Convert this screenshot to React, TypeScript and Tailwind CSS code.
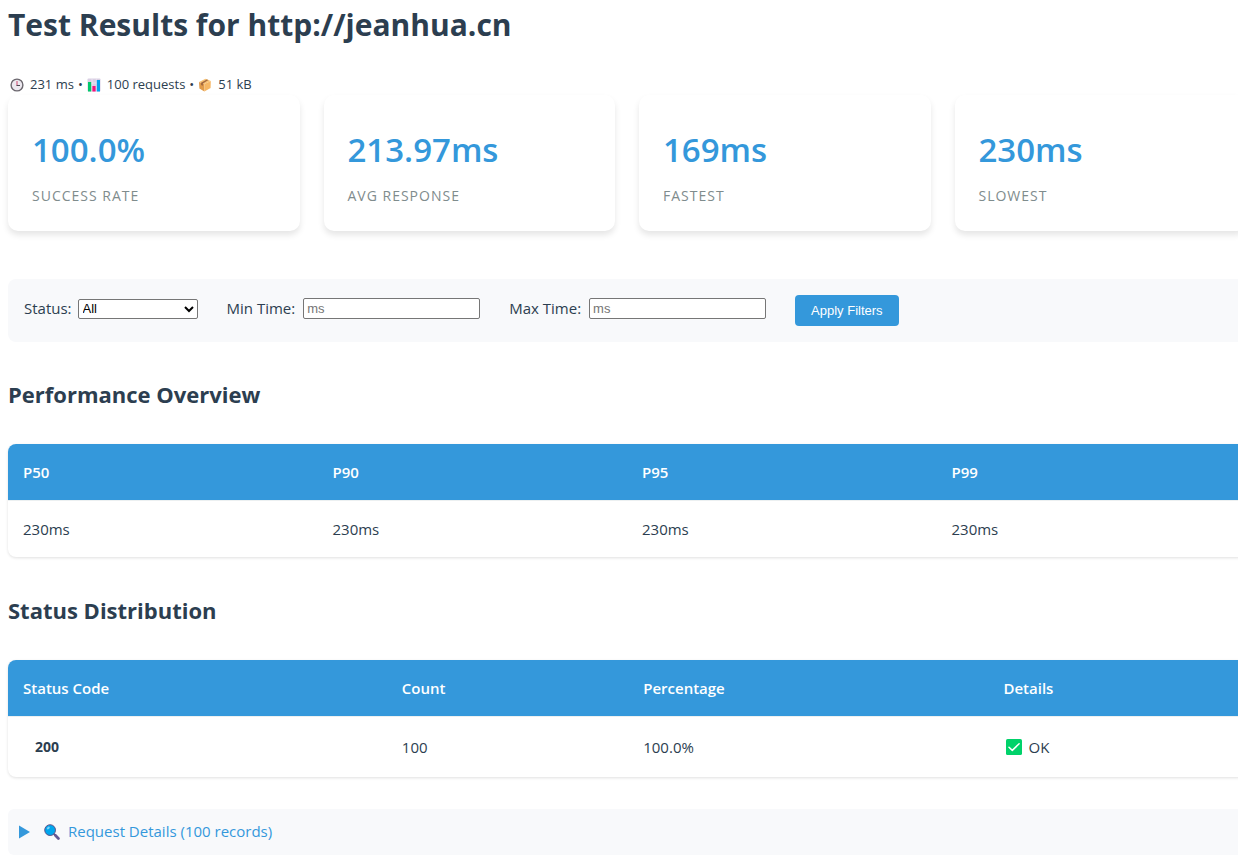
import type { ReactNode } from "react";

const cards = [
  { value: "100.0%", label: "Success Rate" },
  { value: "213.97ms", label: "Avg Response" },
  { value: "169ms", label: "Fastest" },
  { value: "230ms", label: "Slowest" },
];

const percentiles = [
  { name: "P50", value: "230ms" },
  { name: "P90", value: "230ms" },
  { name: "P95", value: "230ms" },
  { name: "P99", value: "230ms" },
];

function ClockIcon() {
  return (
    <svg viewBox="0 0 14 14" className="size-3.5 shrink-0" aria-hidden="true">
      <circle cx="7" cy="7" r="5.9" fill="#ece8ef" stroke="#6b676e" strokeWidth="1.4" />
      <path d="M7 3V7.5" stroke="#d0466f" strokeWidth="1" fill="none" />
      <path d="M6.5 7.5H10" stroke="#4d4852" strokeWidth="1" fill="none" />
    </svg>
  );
}

function ChartIcon() {
  return (
    <svg viewBox="0 0 14 14" className="size-3.5 shrink-0" aria-hidden="true">
      <rect x="0.5" y="0.5" width="13" height="13" rx="1" fill="#d9cfe3" />
      <path d="M0.5 5H13.5M0.5 9H13.5M5 0.5V13.5M9.3 0.5V13.5" stroke="#f0eaf5" strokeWidth="0.7" />
      <rect x="1" y="4" width="3.2" height="9.5" fill="#00c96b" />
      <rect x="5.4" y="8" width="3.2" height="5.5" fill="#f5127b" />
      <rect x="9.8" y="2" width="3.2" height="11.5" fill="#00a2ed" />
    </svg>
  );
}

function PackageIcon() {
  return (
    <svg viewBox="0 0 14 14" className="size-3.5 shrink-0" aria-hidden="true">
      <path d="M1 4L7.5 0.8L12.8 3L6.4 6Z" fill="#f8c274" />
      <path d="M1 4L6.4 6V13.4L1.4 10.6Z" fill="#e09a4a" />
      <path d="M6.4 6L12.8 3L12.6 10L6.4 13.4Z" fill="#f6b765" />
      <path d="M3 4.8L8.8 1.4L10.4 2.1L5 5.4V7.8L3 7Z" fill="#a56a41" />
    </svg>
  );
}

function CheckIcon() {
  return (
    <svg viewBox="0 0 16 16" className="size-4 shrink-0" aria-hidden="true">
      <rect width="16" height="16" rx="1.6" fill="#00d26a" />
      <path d="M3 8.2L6.3 11.4L13.1 4.8" fill="none" stroke="#fff" strokeWidth="1.5" strokeLinecap="round" strokeLinejoin="round" />
    </svg>
  );
}

function SearchIcon() {
  return (
    <svg viewBox="0 0 16 16" className="size-4 shrink-0" aria-hidden="true">
      <path d="M9.5 9.5L11.5 11.5" stroke="#533566" strokeWidth="1.6" />
      <path d="M11.3 11.3L14.4 14.4" stroke="#635994" strokeWidth="2.8" strokeLinecap="round" />
      <circle cx="6.1" cy="6.1" r="5.4" fill="#00a6ed" stroke="#5a4a80" strokeWidth="0.9" />
      <ellipse cx="4.3" cy="4" rx="1.7" ry="1.1" fill="#7cd3f7" transform="rotate(-40 4.3 4)" />
    </svg>
  );
}

function SectionTitle({ children }: { children: ReactNode }) {
  return <h2 className="mb-8 text-[22px] leading-9 font-bold">{children}</h2>;
}

const tableClass =
  "w-full table-fixed border-collapse overflow-hidden rounded-lg bg-white text-left text-[15px] leading-[26px] shadow-[0_1px_3px_rgba(0,0,0,0.12)]";
const headClass = "border-b border-[#ecf0f1] bg-[#3498db] px-[15px] py-[15px] font-semibold text-white";
const cellClass = "px-[15px] py-[15px]";
const fieldClass =
  "h-[21px] w-[177px] rounded-[2px] border border-[#767676] bg-white px-[3px] font-['Liberation_Sans',sans-serif] text-[13px] text-black placeholder:text-[#757575]";

export default function App() {
  return (
    <div className="overflow-x-hidden bg-white font-['Open_Sans','Noto_Sans',sans-serif] text-[#2c3e50]">
      <main className="-mr-2 ml-2">
        <h1 className="pt-1 text-[30px] leading-[42px] font-bold">Test Results for http://jeanhua.cn</h1>

        <div className="mt-7 flex h-[21px] items-center pl-0.5 text-[13px]">
          <ClockIcon />
          <span className="ml-1.5">231 ms</span>
          <span className="mx-1">•</span>
          <ChartIcon />
          <span className="ml-1.5">100 requests</span>
          <span className="mx-1">•</span>
          <PackageIcon />
          <span className="ml-1.5">51 kB</span>
        </div>

        <section className="grid grid-cols-4 gap-6">
          {cards.map((card) => (
            <div key={card.label} className="rounded-[10px] bg-white p-6 shadow-[0_4px_6px_rgba(0,0,0,0.1)]">
              <div className="text-[33px] leading-[62px] font-semibold text-[#3498db]">{card.value}</div>
              <div className="mt-1 text-[14px] leading-[22px] tracking-[1px] text-[#7f8c8d] uppercase">{card.label}</div>
            </div>
          ))}
        </section>

        <form
          className="mt-12 flex h-[63px] items-center rounded-lg bg-[#f8f9fb] px-4 text-[15px]"
          onSubmit={(event) => event.preventDefault()}
        >
          <label className="flex items-center gap-1.5 pb-1">
            Status:
            <select className="h-5 w-[120px] rounded-[2px] border border-[#767676] bg-white font-['Liberation_Sans',sans-serif] text-[13px] text-black">
              <option>All</option>
              <option>Success</option>
              <option>Failed</option>
            </select>
          </label>
          <label className="ml-[29px] flex items-center gap-2 pb-1">
            Min Time:
            <input type="number" placeholder="ms" className={fieldClass} />
          </label>
          <label className="ml-[29px] flex items-center gap-2 pb-1">
            Max Time:
            <input type="number" placeholder="ms" className={fieldClass} />
          </label>
          <button
            type="submit"
            className="ml-[29px] h-[31px] rounded bg-[#3498db] px-4 font-['Liberation_Sans',sans-serif] text-[13px] text-white"
          >
            Apply Filters
          </button>
        </form>

        <section className="mt-[34px]">
          <SectionTitle>Performance Overview</SectionTitle>
          <table className={tableClass}>
            <thead>
              <tr>
                {percentiles.map((item) => (
                  <th key={item.name} className={headClass}>{item.name}</th>
                ))}
              </tr>
            </thead>
            <tbody>
              <tr>
                {percentiles.map((item) => (
                  <td key={item.name} className={cellClass}>{item.value}</td>
                ))}
              </tr>
            </tbody>
          </table>
        </section>

        <section className="mt-[35px]">
          <SectionTitle>Status Distribution</SectionTitle>
          <table className={tableClass}>
            <colgroup>
              <col className="w-[30.6%]" />
              <col className="w-[19.5%]" />
              <col className="w-[29.1%]" />
              <col className="w-[20.8%]" />
            </colgroup>
            <thead>
              <tr>
                <th className={headClass}>Status Code</th>
                <th className={headClass}>Count</th>
                <th className={headClass}>Percentage</th>
                <th className={headClass}>Details</th>
              </tr>
            </thead>
            <tbody>
              <tr className="h-[60px]">
                <td className={cellClass}>
                  <span className="px-3 text-[14px] font-bold">200</span>
                </td>
                <td className={cellClass}>100</td>
                <td className={cellClass}>100.0%</td>
                <td className={cellClass}>
                  <span className="flex items-center gap-1.5 pl-[3px]">
                    <CheckIcon />
                    OK
                  </span>
                </td>
              </tr>
            </tbody>
          </table>
        </section>

        <details className="mt-8 rounded-md bg-[#f8f9fb] text-[15px] text-[#3498db]">
          <summary className="flex h-[46px] cursor-pointer list-none items-center px-2.5">
            <svg viewBox="0 0 12 14" className="h-3.5 w-3" aria-hidden="true">
              <path d="M1 0.5L12 7L1 13.5Z" fill="currentColor" />
            </svg>
            <span className="ml-3.5 flex items-center gap-2">
              <SearchIcon />
              Request Details (100 records)
            </span>
          </summary>
        </details>
      </main>
    </div>
  );
}
